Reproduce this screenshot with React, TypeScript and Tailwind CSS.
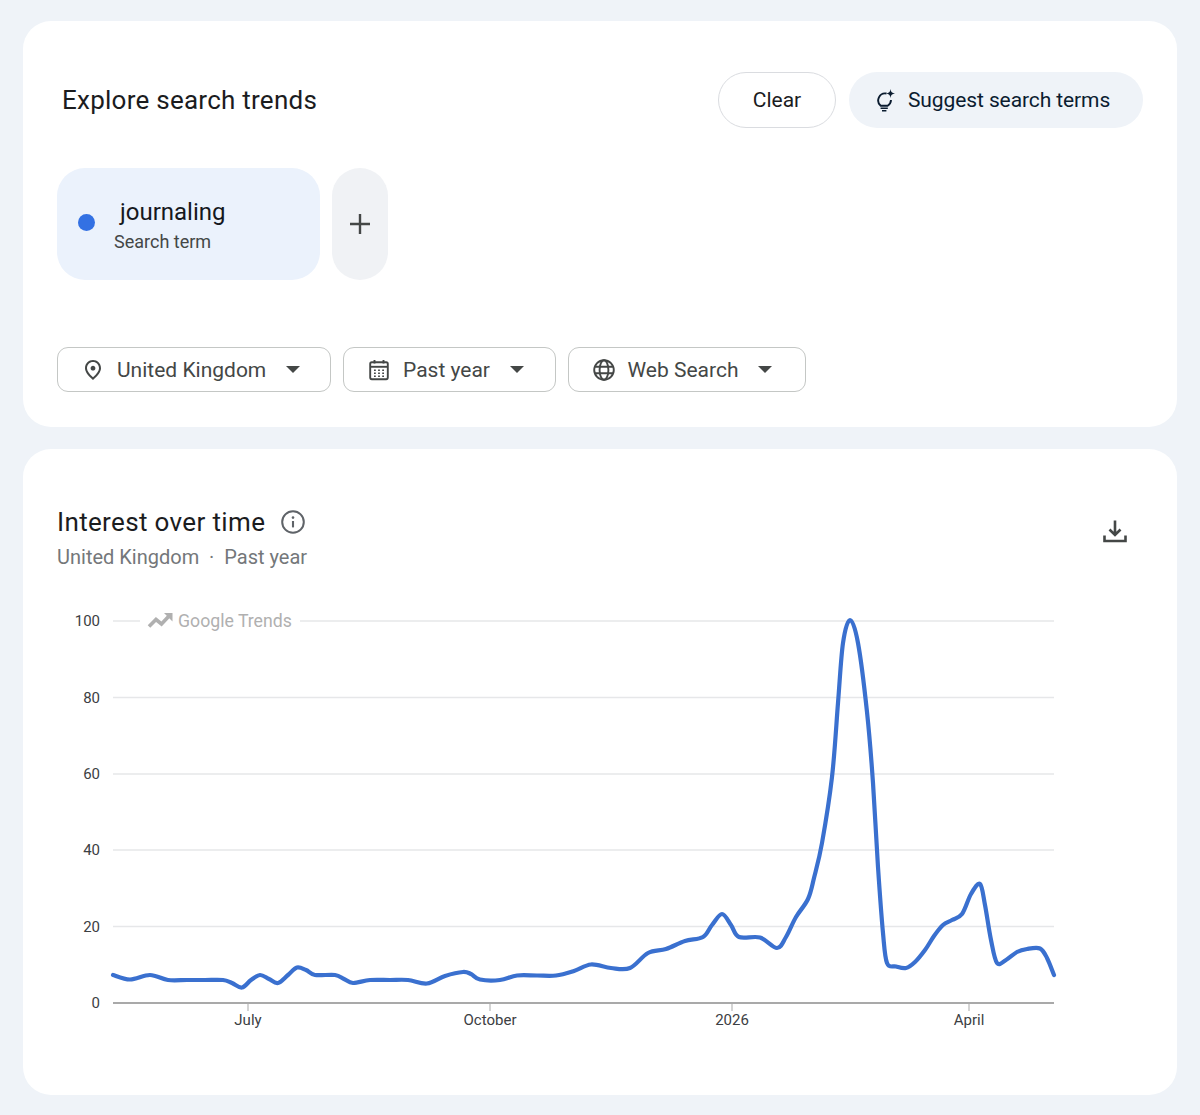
const font = "font-['Roboto',sans-serif]";

// x, y in page coordinates, picked off the reference line
const trendPoints: [number, number][] = [
  [113, 975], [130, 979.5], [150, 975], [168, 980], [187, 980], [205, 980], [223, 980], [232, 983], [242, 987.5],
  [251, 980], [260, 975], [269, 979], [278, 983], [288, 975], [297, 967.5], [306, 970], [315, 975], [335, 975],
  [344, 979], [353, 983], [370, 980], [390, 980], [408, 980], [427, 983.5], [445, 976], [463, 972], [471, 974],
  [480, 979.5], [500, 980], [517, 975.5], [537, 975.5], [556, 975.5], [574, 971], [591, 964.5], [611, 968], [630, 968],
  [648, 953], [666, 949], [685, 941], [703, 937], [712, 925], [722, 914], [731, 925], [739, 937], [760, 937.5],
  [777, 948], [786, 937], [796, 917], [808, 899], [814, 878], [822, 843], [832, 777], [838, 703], [843, 643],
  [850, 620], [858, 643], [867, 712], [873, 783], [878, 867], [883, 933], [887, 963], [896, 966.5], [906, 968],
  [915, 962], [925, 950], [934, 936], [943, 925], [952, 920], [962, 914], [971, 894], [980, 884], [985, 905],
  [991, 940], [997, 963], [1006, 960], [1017, 952], [1027, 949], [1040, 948.5], [1047, 958], [1054, 975],
];

function smoothPath(points: [number, number][]) {
  let d = `M${points[0][0]} ${points[0][1]}`;
  for (let i = 0; i < points.length - 1; i++) {
    const p0 = points[Math.max(i - 1, 0)];
    const p1 = points[i];
    const p2 = points[i + 1];
    const p3 = points[Math.min(i + 2, points.length - 1)];
    const c1x = p1[0] + (p2[0] - p0[0]) / 6;
    const c1y = p1[1] + (p2[1] - p0[1]) / 6;
    const c2x = p2[0] - (p3[0] - p1[0]) / 6;
    const c2y = p2[1] - (p3[1] - p1[1]) / 6;
    d += ` C${c1x.toFixed(1)} ${c1y.toFixed(1)} ${c2x.toFixed(1)} ${c2y.toFixed(1)} ${p2[0]} ${p2[1]}`;
  }
  return d;
}

function Caret() {
  return <span className="w-0 h-0 border-l-[7px] border-r-[7px] border-t-[7px] border-l-transparent border-r-transparent border-t-[#444746]" />;
}

function PinIcon() {
  return (
    <svg width="26" height="26" viewBox="0 0 24 24" fill="#444746">
      <path d="M12 12.6c-1.3 0-2.4-1.1-2.4-2.4s1.1-2.4 2.4-2.4 2.4 1.1 2.4 2.4-1.1 2.4-2.4 2.4zm6-2.4C18 6.57 15.35 4 12 4s-6 2.57-6 6.2c0 2.34 1.95 5.44 6 9.14 4.05-3.7 6-6.8 6-9.14zM12 2c4.2 0 8 3.22 8 8.2 0 3.32-2.67 7.25-8 11.8-5.33-4.55-8-8.48-8-11.8C4 5.22 7.8 2 12 2z" />
    </svg>
  );
}

function CalendarIcon() {
  return (
    <svg width="24" height="24" viewBox="0 0 24 24" fill="none" stroke="#444746">
      <rect x="3.2" y="4.2" width="17.6" height="17" rx="1.6" strokeWidth="1.9" />
      <path d="M3.2 8.8h17.6" strokeWidth="1.9" />
      <path d="M7.5 2v3.6M16.5 2v3.6" strokeWidth="1.9" />
      <path d="M7 12.2h1.8M11.1 12.2h1.8M15.2 12.2h1.8M7 15.2h1.8M11.1 15.2h1.8M15.2 15.2h1.8M7 18.2h1.8M11.1 18.2h1.8M15.2 18.2h1.8" strokeWidth="1.6" />
    </svg>
  );
}

function GlobeIcon() {
  return (
    <svg width="24" height="24" viewBox="0 0 24 24" fill="none" stroke="#444746" strokeWidth="1.9">
      <circle cx="12" cy="12" r="9.8" />
      <ellipse cx="12" cy="12" rx="4.4" ry="9.8" />
      <path d="M3 8.7h18M3 15.3h18" />
    </svg>
  );
}

function SparkBulbIcon() {
  return (
    <svg width="24" height="24" viewBox="0 0 24 24" fill="none" stroke="#0b1c30" strokeWidth="1.9">
      <path d="M10.5 5.5A7 7 0 0 0 4.7 17.7H11.7A7 7 0 0 0 15 12" />
      <path d="M4.6 20.2h7.2M6 22.8h4.4" strokeWidth="1.6" />
      <path d="M14.5 1c.4 3 1.5 4.1 4.5 4.5-3 .4-4.1 1.5-4.5 4.5-.4-3-1.5-4.1-4.5-4.5 3-.4 4.1-1.5 4.5-4.5z" fill="#0b1c30" stroke="none" />
    </svg>
  );
}

function InfoIcon() {
  return (
    <svg width="24" height="24" viewBox="0 0 24 24" fill="none" stroke="#5f6368" strokeWidth="2">
      <circle cx="12" cy="12" r="10.8" />
      <path d="M12 11v6.4" strokeWidth="2.1" />
      <circle cx="12" cy="7.6" r="1.3" fill="#5f6368" stroke="none" />
    </svg>
  );
}

function DownloadIcon() {
  return (
    <svg width="26" height="26" viewBox="0 0 26 26" fill="none" stroke="#444746" strokeWidth="2.6">
      <path d="M13 2.5v14M7.5 11.5l5.5 5.5 5.5-5.5" />
      <path d="M2.5 17.5v5.5h21v-5.5" />
    </svg>
  );
}

function FilterButton({ icon, label, width }: { icon: React.ReactNode; label: string; width: string }) {
  return (
    <button className={`${width} h-[45px] flex items-center gap-[12px] pl-[23px] bg-white border border-[#c4c7c5] rounded-[11px] text-[#444746] text-[21px]`}>
      <span className="w-[24px] flex justify-center shrink-0">{icon}</span>
      <span className="whitespace-nowrap pt-[2px]">{label}</span>
      <span className="flex ml-[8px]"><Caret /></span>
    </button>
  );
}

function Chart() {
  const grid = [
    { y: 621, label: '100' },
    { y: 697.5, label: '80' },
    { y: 774, label: '60' },
    { y: 850, label: '40' },
    { y: 926.5, label: '20' },
  ];
  const months = [
    { x: 248, label: 'July' },
    { x: 490, label: 'October' },
    { x: 732, label: '2026' },
    { x: 969, label: 'April' },
  ];
  return (
    <svg className="block mt-[29px]" width="1154" height="440" viewBox="23 600 1154 440">
      {grid.map((g) => (
        <g key={g.label}>
          <line x1="113" x2="1054" y1={g.y} y2={g.y} stroke="#e6e7e9" strokeWidth="1.3" />
          <text x="100" y={g.y + 5} textAnchor="end" fontSize="15" fill="#3c4043">{g.label}</text>
        </g>
      ))}
      <rect x="140" y="608" width="160" height="26" fill="#ffffff" />
      <path d="M149 626.5l7-7 5.5 4.5 8-8.5" fill="none" stroke="#b0b0b0" strokeWidth="3.6" />
      <path d="M164 613h8.5v8.5z" fill="#b0b0b0" />
      <text x="178" y="626.5" fontSize="17.7" fill="#b0b0b0">Google Trends</text>
      <line x1="113" x2="1054" y1="1003" y2="1003" stroke="#a9a9a9" strokeWidth="2" />
      <text x="100" y="1008" textAnchor="end" fontSize="15" fill="#3c4043">0</text>
      {months.map((m) => (
        <g key={m.label}>
          <line x1={m.x} x2={m.x} y1="1003" y2="1011" stroke="#a9a9a9" strokeWidth="1" />
          <text x={m.x} y="1025" textAnchor="middle" fontSize="15" fill="#3c4043">{m.label}</text>
        </g>
      ))}
      <path d={smoothPath(trendPoints)} fill="none" stroke="#3a70cf" strokeWidth="4.2" strokeLinecap="round" strokeLinejoin="round" />
    </svg>
  );
}

export default function App() {
  return (
    <div className={`${font} min-h-screen bg-[#eff3f8] px-[23px] pt-[21px] pb-[20px] flex flex-col gap-[22px]`}>
      <section className="bg-white rounded-[28px] h-[406px] pt-[51px] px-[34px]">
        <div className="flex items-center justify-between h-[56px]">
          <h1 className="pl-[5px] text-[26px] font-[450] tracking-[0.25px] text-[#1b1c1e]">Explore search trends</h1>
          <div className="flex gap-[13px]">
            <button className="w-[118px] h-[56px] pt-[1px] rounded-full border border-[#dadce0] bg-white text-[21px] text-[#1b1c1e]">Clear</button>
            <button className="w-[294px] h-[56px] rounded-full bg-[#eff3f8] flex items-center gap-[8px] pl-[27px] text-[21px] tracking-[-0.1px] text-[#0b1c30]">
              <SparkBulbIcon />
              <span className="pt-[1px]">Suggest search terms</span>
            </button>
          </div>
        </div>

        <div className="flex gap-[12px] mt-[40px]">
          <div className="w-[263px] h-[112px] rounded-[28px] bg-[#ebf2fc] flex items-center pl-[21px]">
            <span className="w-[17px] h-[17px] mb-[3px] rounded-full bg-[#3371e3] shrink-0" />
            <div className="ml-[19px] pt-[3px] flex flex-col">
              <span className="pl-[6px] text-[24px] leading-[30px] text-[#15181d]">journaling</span>
              <span className="mt-[2px] text-[18px] leading-[26px] text-[#444746]">Search term</span>
            </div>
          </div>
          <button className="w-[56px] h-[112px] rounded-full bg-[#f0f2f5] flex items-center justify-center">
            <svg width="22" height="22" viewBox="0 0 22 22" stroke="#444746" strokeWidth="2.4">
              <path d="M11 1v20M1 11h20" />
            </svg>
          </button>
        </div>

        <div className="flex gap-[12px] mt-[67px]">
          <FilterButton icon={<PinIcon />} label="United Kingdom" width="w-[274px]" />
          <FilterButton icon={<CalendarIcon />} label="Past year" width="w-[212.5px]" />
          <FilterButton icon={<GlobeIcon />} label="Web Search" width="w-[238.5px]" />
        </div>
      </section>

      <section className="bg-white rounded-[28px] h-[646px] pt-[57px]">
        <div className="flex justify-between pl-[34px] pr-[49px]">
          <div>
            <div className="flex items-center gap-[16px] h-[32px]">
              <h2 className="text-[26px] font-[450] tracking-[0.35px] text-[#1b1c1e]">Interest over time</h2>
              <InfoIcon />
            </div>
            <p className="mt-[5px] text-[20px] leading-[28px] text-[#74777a]">United Kingdom &nbsp;·&nbsp; Past year</p>
          </div>
          <div className="pt-[12px]"><DownloadIcon /></div>
        </div>
        <Chart />
      </section>
    </div>
  );
}
